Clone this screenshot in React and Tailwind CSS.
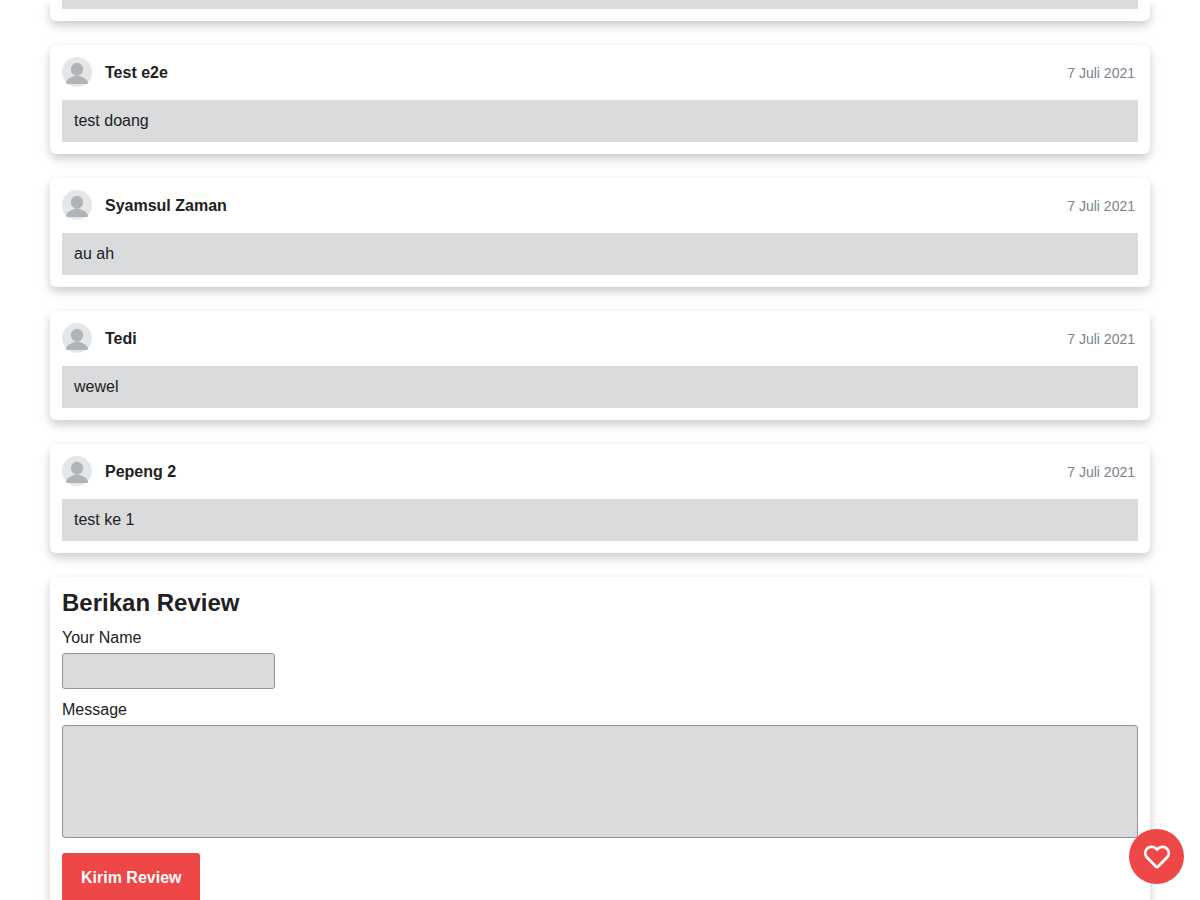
import React from 'react';

const reviews = [
  { name: 'Test e2e', date: '7 Juli 2021', text: 'test doang' },
  { name: 'Syamsul Zaman', date: '7 Juli 2021', text: 'au ah' },
  { name: 'Tedi', date: '7 Juli 2021', text: 'wewel' },
  { name: 'Pepeng 2', date: '7 Juli 2021', text: 'test ke 1' },
];

function Avatar() {
  return (
    <svg viewBox="0 0 30 30" className="size-[30px] shrink-0" aria-hidden="true">
      <circle cx="15" cy="15" r="15" fill="#e4e6e8" />
      <ellipse cx="15" cy="12.2" rx="6.1" ry="6.4" fill="#aeb4b8" />
      <path d="M3.800 25.500C5.200 21.800 9 20.200 12.200 19.300L15 18L17.800 19.300C21 20.200 24.800 21.800 26.200 25.500Q25.800 27 24.600 27H5.400Q4.200 27 3.800 25.500Z" fill="#aeb4b8" />
    </svg>
  );
}

function Card({ className = '', children }) {
  return (
    <div className={`bg-white px-3 pb-3 shadow-[0_4px_8px_rgba(0,0,0,0.16),0_6px_16px_rgba(0,0,0,0.06)] ${className}`}>
      {children}
    </div>
  );
}

function Review({ name, date, text }) {
  return (
    <Card className="rounded-md pt-3">
      <div className="flex items-center justify-between pr-[3px]">
        <div className="flex items-center gap-[13px]">
          <Avatar />
          <h3 className="pt-0.5 font-bold">{name}</h3>
        </div>
        <time className="pt-0.5 text-sm text-[#79828b]">{date}</time>
      </div>
      <p className="mt-[13px] bg-[#dadbdd] p-3 leading-[18px]">{text}</p>
    </Card>
  );
}

export default function App() {
  return (
    <div className="h-screen overflow-hidden bg-white font-['Liberation_Sans',Arial,sans-serif] text-base text-[#212121]">
      <main className="mx-[50px] flex flex-col gap-6">
        <Card className="rounded-b-md">
          <div className="h-[9px] bg-[#dadbdd]" />
        </Card>
        {reviews.map((r) => (
          <Review key={r.name} {...r} />
        ))}
        <Card className="rounded-md pt-3">
          <form onSubmit={(e) => e.preventDefault()} className="flex flex-col items-start">
            <h2 className="text-2xl leading-7 font-bold">Berikan Review</h2>
            <label htmlFor="name" className="mt-3 leading-[18px]">Your Name</label>
            <input
              id="name"
              type="text"
              className="mt-1.5 h-9 w-[213px] rounded-[3px] border border-[#929394] bg-[#dadbdd] px-2 outline-none"
            />
            <label htmlFor="message" className="mt-3 leading-[18px]">Message</label>
            <textarea
              id="message"
              className="mt-1.5 h-[113px] w-full resize-none rounded-[3px] border border-[#929394] bg-[#dadbdd] p-2 outline-none"
            />
            <button type="submit" className="mt-[15px] h-[50px] rounded-[3px] bg-[#ed4747] px-[19px] font-bold text-white">
              Kirim Review
            </button>
          </form>
        </Card>
      </main>
      <button
        type="button"
        aria-label="Suka"
        className="fixed right-4 bottom-4 flex size-[55px] items-center justify-center rounded-full bg-[#ed4747] text-white"
      >
        <svg viewBox="0 0 28 28" className="size-7" fill="none" stroke="currentColor" strokeWidth="2.8" strokeLinejoin="round" strokeLinecap="round" aria-hidden="true">
          <path d="M14 6.500C11.300 3.200 6.700 3 4 5.700C1.500 8.400 1.700 12 3.900 14.300L12.900 23.400Q14 24.400 15.100 23.400L24.100 14.300C26.300 12 26.500 8.400 24 5.700C21.300 3 16.700 3.200 14 6.500Z" />
        </svg>
      </button>
    </div>
  );
}
